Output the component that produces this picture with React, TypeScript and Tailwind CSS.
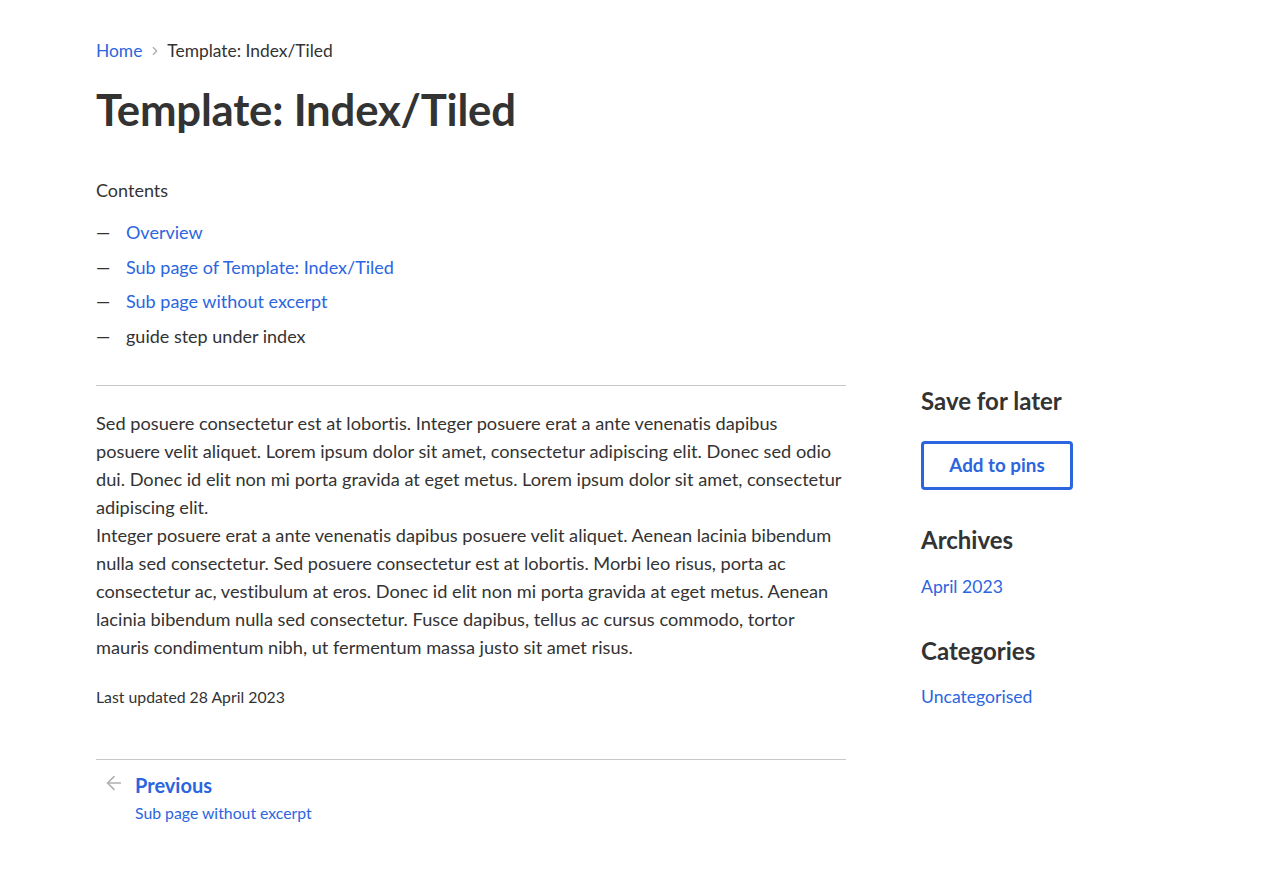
import { ArrowLeft, ChevronRight } from 'lucide-react'

const LINK = 'text-[#2b65e0]'

const TOC = [
  { label: 'Overview', link: true },
  { label: 'Sub page of Template: Index/Tiled', link: true },
  { label: 'Sub page without excerpt', link: true },
  { label: 'guide step under index', link: false },
]

export default function App() {
  return (
    <div className="min-h-screen bg-white text-[#333333] font-['Lato','Liberation_Sans',sans-serif] [font-variant-ligatures:no-common-ligatures] px-[96px]">
      {/* header */}
      <nav className="pt-[39px] flex items-center text-[17.4px] leading-6">
        <a className={LINK}>Home</a>
        <ChevronRight size={14} strokeWidth={2} className="ml-[6px] mr-[5px] text-[#aaaaaa]" />
        <span>Template: Index/Tiled</span>
      </nav>
      <h1 className="mt-[20px] text-[43.7px] font-bold leading-[52px] tracking-[-0.2px]">Template: Index/Tiled</h1>

      <div className="mt-[41px] text-[18px]">
        <div className="leading-7">Contents</div>
        <ul className="mt-[14px] flex flex-col gap-[6.5px]">
          {TOC.map((item) => (
            <li key={item.label} className="flex leading-7">
              <span className="w-[30px]">—</span>
              {item.link ? <a className={LINK}>{item.label}</a> : <span>{item.label}</span>}
            </li>
          ))}
        </ul>
      </div>

      <div className="mt-[35px] flex gap-[75px]">
        <main className="w-[750px] flex-shrink-0">
          <div className="border-t border-[#c8c8c8] pt-[23px] text-[18.2px] leading-7">
            <p>
              Sed posuere consectetur est at lobortis. Integer posuere erat a ante venenatis dapibus posuere velit
              aliquet. Lorem ipsum dolor sit amet, consectetur adipiscing elit. Donec sed odio dui. Donec id elit non mi
              porta gravida at eget metus. Lorem ipsum dolor sit amet, consectetur adipiscing elit.
            </p>
            <p>
              Integer posuere erat a ante venenatis dapibus posuere velit aliquet. Aenean lacinia bibendum nulla sed
              consectetur. Sed posuere consectetur est at lobortis. Morbi leo risus, porta ac consectetur ac, vestibulum
              at eros. Donec id elit non mi porta gravida at eget metus. Aenean lacinia bibendum nulla sed consectetur.
              Fusce dapibus, tellus ac cursus commodo, tortor mauris condimentum nibh, ut fermentum massa justo sit amet
              risus.
            </p>
          </div>
          <div className="mt-[24px] text-[15.8px] leading-6">Last updated 28 April 2023</div>

          <div className="mt-[50px] border-t border-[#c8c8c8] pt-[11px] flex">
            <ArrowLeft size={22} strokeWidth={1.75} className="ml-[7px] mt-[1px] text-[#b0b0b0]" />
            <div className="ml-[10px]">
              <div className={`${LINK} text-[20px] font-bold leading-7`}>Previous</div>
              <div className={`${LINK} text-[15.8px] leading-6 mt-[2px]`}>Sub page without excerpt</div>
            </div>
          </div>
        </main>

        <aside className="flex-1">
          <h2 className="mt-0 text-[24px] font-bold leading-8">Save for later</h2>
          <button
            className={`mt-[24px] w-[152px] h-[49px] border-[3px] border-[#2b65e0] rounded-[4px] ${LINK} text-[18.8px] font-bold`}
          >
            Add to pins
          </button>
          <h2 className="mt-[34px] text-[24px] font-bold leading-8">Archives</h2>
          <a className={`block mt-[17px] ${LINK} text-[17.6px] leading-7`}>April 2023</a>
          <h2 className="mt-[34px] text-[24px] font-bold leading-8">Categories</h2>
          <a className={`block mt-[16px] ${LINK} text-[17.6px] leading-7`}>Uncategorised</a>
        </aside>
      </div>
    </div>
  )
}
